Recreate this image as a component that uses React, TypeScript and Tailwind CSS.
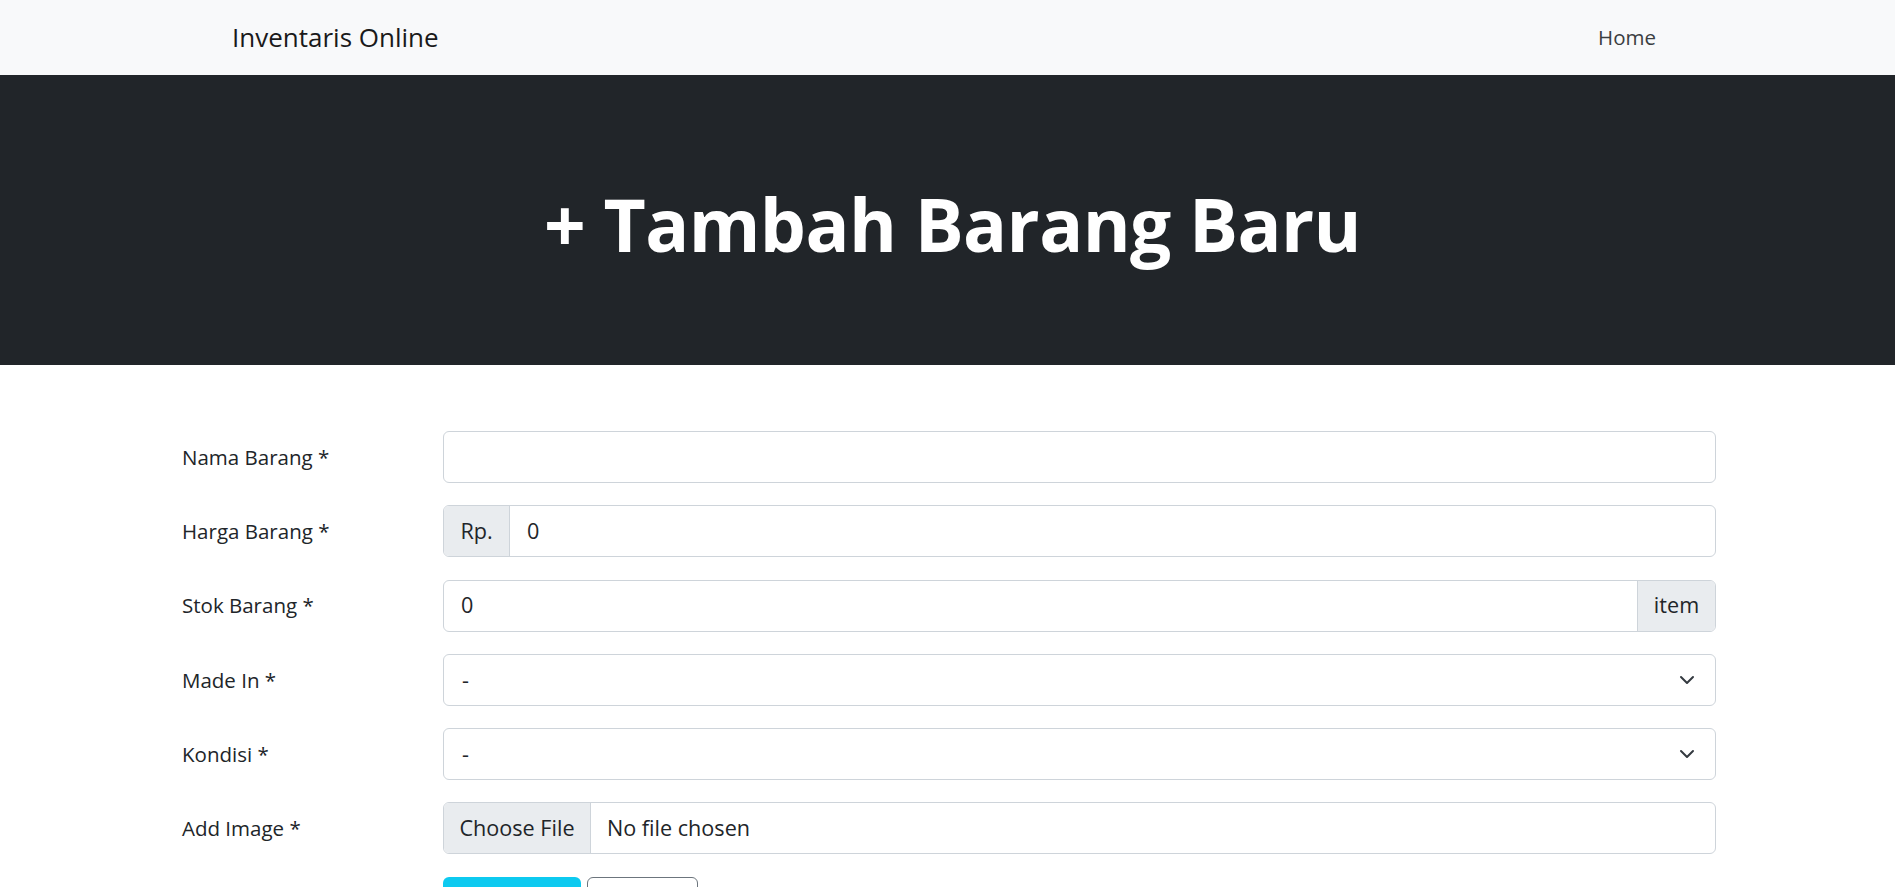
import React from "react";

function Chevron() {
  return (
    <svg width="16" height="16" viewBox="0 0 16 16" fill="none" className="shrink-0">
      <path d="M2 5l6 6 6-6" stroke="#343a40" strokeWidth="2" strokeLinecap="round" strokeLinejoin="round" />
    </svg>
  );
}

function Row({ label, children }: { label: string; children: React.ReactNode }) {
  return (
    <div className="flex items-center h-[52px]">
      <div className="w-[261px] shrink-0 text-[20.5px] text-[#212529]">{label}</div>
      <div className="flex-1 h-full">{children}</div>
    </div>
  );
}

export default function App() {
  return (
    <div className="min-h-screen bg-white text-[#212529]" style={{ fontFamily: '"Open Sans", "Noto Sans", sans-serif' }}>
      <nav className="h-[75px] bg-[#f8f9fa] flex items-center justify-between pl-[232px] pr-[239px]">
        <span className="text-[26px] text-[#1a1a1a]">Inventaris Online</span>
        <span className="text-[20.5px] text-[#3b3e41]">Home</span>
      </nav>

      <header className="h-[290px] bg-[#212529] flex items-center justify-center pt-[6px] pl-[10px]">
        <h1 className="text-[73px] font-bold text-white leading-none tracking-[-0.6px]">+ Tambah Barang Baru</h1>
      </header>

      <form className="pl-[182px] pr-[179px] pt-[66px] flex flex-col gap-[22.3px]">
        <Row label="Nama Barang *">
          <div className="h-full border border-[#ced4da] rounded-[6px] bg-white" />
        </Row>
        <Row label="Harga Barang *">
          <div className="h-full flex border border-[#ced4da] rounded-[6px] overflow-hidden text-[21.6px]">
            <div className="w-[66px] bg-[#e9ecef] border-r border-[#ced4da] flex items-center justify-center">Rp.</div>
            <div className="flex-1 flex items-center pl-[17px]">0</div>
          </div>
        </Row>
        <Row label="Stok Barang *">
          <div className="h-full flex border border-[#ced4da] rounded-[6px] overflow-hidden text-[21.6px]">
            <div className="flex-1 flex items-center pl-[17px]">0</div>
            <div className="w-[78px] bg-[#e9ecef] border-l border-[#ced4da] flex items-center justify-center">item</div>
          </div>
        </Row>
        <Row label="Made In *">
          <div className="h-full flex items-center justify-between border border-[#ced4da] rounded-[6px] pl-[18px] pr-[20px] text-[21.6px]">
            <span>-</span>
            <Chevron />
          </div>
        </Row>
        <Row label="Kondisi *">
          <div className="h-full flex items-center justify-between border border-[#ced4da] rounded-[6px] pl-[18px] pr-[20px] text-[21.6px]">
            <span>-</span>
            <Chevron />
          </div>
        </Row>
        <Row label="Add Image *">
          <div className="h-full flex border border-[#ced4da] rounded-[6px] overflow-hidden text-[21.6px]">
            <div className="w-[147px] bg-[#e9ecef] border-r border-[#ced4da] flex items-center justify-center">Choose File</div>
            <div className="flex-1 flex items-center pl-[16px]">No file chosen</div>
          </div>
        </Row>
        <div className="flex pl-[261px] gap-[6px] pb-[40px]">
          <button type="button" className="h-[52px] w-[138px] rounded-[6px] bg-[#0dcaf0] text-[21.6px] text-black">Simpan</button>
          <button type="button" className="h-[52px] w-[111px] rounded-[6px] border border-[#6c757d] text-[21.6px] text-[#6c757d]">Reset</button>
        </div>
      </form>
    </div>
  );
}
